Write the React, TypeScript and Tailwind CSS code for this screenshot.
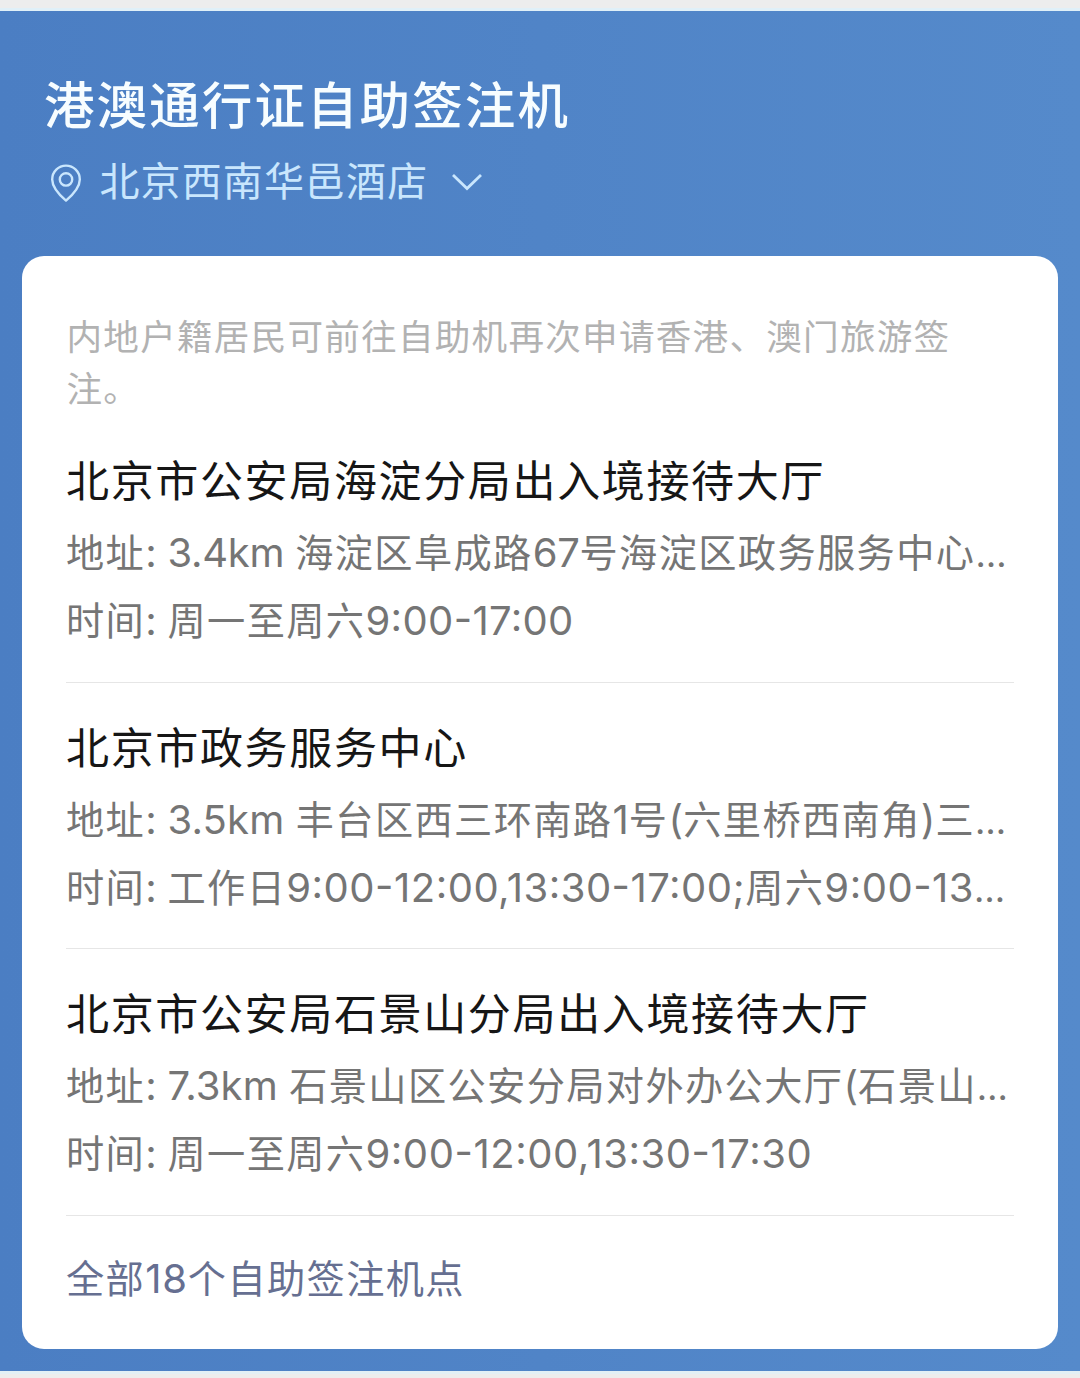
import React from "react";

type Site = {
  name: string;
  address: string;
  addressLatin: string;
  hours: string;
  hoursLatin: string;
};

const sites: Site[] = [
  {
    name: "北京市公安局海淀分局出入境接待大厅",
    address: "3.4km 海淀区阜成路67号海淀区政务服务中心…",
    addressLatin: "tracking-[-0.3px]",
    hours: "周一至周六9:00-17:00",
    hoursLatin: "tracking-[0.35px]",
  },
  {
    name: "北京市政务服务中心",
    address: "3.5km 丰台区西三环南路1号(六里桥西南角)三…",
    addressLatin: "tracking-[0.15px]",
    hours: "工作日9:00-12:00,13:30-17:00;周六9:00-13…",
    hoursLatin: "tracking-[0.5px]",
  },
  {
    name: "北京市公安局石景山分局出入境接待大厅",
    address: "7.3km 石景山区公安分局对外办公大厅(石景山…",
    addressLatin: "tracking-[0.1px]",
    hours: "周一至周六9:00-12:00,13:30-17:30",
    hoursLatin: "tracking-[0.55px]",
  },
];

function PinIcon() {
  return (
    <svg className="mt-[1px] h-[38px] w-[32px] shrink-0" viewBox="0 0 32 38" fill="none" stroke="currentColor" strokeWidth="2.4">
      <path d="M16 36.6C13 34 2.2 24.6 2.2 15.4a13.8 13.8 0 0 1 27.6 0C29.8 24.6 19 34 16 36.6Z" strokeLinejoin="round" />
      <circle cx="16" cy="15.4" r="6.2" />
    </svg>
  );
}

function ChevronIcon() {
  return (
    <svg className="h-[20px] w-[32px] shrink-0" viewBox="0 0 32 20" fill="none" stroke="currentColor" strokeWidth="2.8">
      <path d="M2 3 16 16.6 30 3" />
    </svg>
  );
}

/* Sets digits and Latin runs slightly larger and tighter than the Chinese around them. */
function MixedText({ text, latin }: { text: string; latin: string }) {
  return (
    <>
      {text.split(/([\x20-\x7e]+|…)/).map((run, i) => {
        if (i % 2 === 0) return run;
        return (
          <span key={i} className={run === "…" ? "text-[36px] tracking-normal" : `text-[40px] ${latin}`}>
            {run}
          </span>
        );
      })}
    </>
  );
}

function DetailLine({ label, text, latin }: { label: string; text: string; latin: string }) {
  return (
    <p className="flex h-[68px] text-[38.2px] leading-[68px] tracking-[1.4px] text-[#757575]">
      <span className="w-[101.5px] shrink-0">
        {label}
        <span className="text-[40px]">:</span>
      </span>
      <span>
        <MixedText text={text} latin={latin} />
      </span>
    </p>
  );
}

function SiteRow({ site }: { site: Site }) {
  return (
    <section className="h-[266.6px] border-b-[1.5px] border-[#e6e6e6] whitespace-nowrap">
      <h2 className="pt-[34px] text-[43px] leading-[62px] font-normal tracking-[1.65px] text-[#161616]">{site.name}</h2>
      <div className="pt-[7px]">
        <DetailLine label="地址" text={site.address} latin={site.addressLatin} />
        <DetailLine label="时间" text={site.hours} latin={site.hoursLatin} />
      </div>
    </section>
  );
}

export default function App() {
  return (
    <main className="flex h-[1378px] w-[1080px] flex-col overflow-hidden bg-[#ededed] pt-2 font-[Inter,'Noto_Sans_CJK_SC',sans-serif] [font-feature-settings:'calt'_1]">
      <div className="flex h-[1366px] flex-col border-y-[3px] border-t-[#e0f0f8] border-b-[#e3f0f5] bg-linear-to-r from-[#4b7ec3] to-[#558acb] bg-origin-border">
        <header className="h-[245px] pt-[62px] pl-[44px]">
          <h1 className="text-[50.5px] leading-[66px] font-medium tracking-[2.1px] text-[#f7fdff]">港澳通行证自助签注机</h1>
          <div className="mt-[13px] flex h-[60px] items-center pl-[6px] text-[#c9e6fd]">
            <PinIcon />
            <span className="ml-[17.5px] text-[40px] leading-[60px] tracking-[1.1px]">北京西南华邑酒店</span>
            <span className="ml-[23px]">
              <ChevronIcon />
            </span>
          </div>
        </header>
        <div className="mx-[22px] h-[1093px] rounded-[22px] bg-white px-[44px] pt-[56px]">
          <p className="h-[104px] pl-[0.5px] text-[35.6px] leading-[52px] tracking-[1.25px] text-[#b2b2b2]">
            内地户籍居民可前往自助机再次申请香港、澳门旅游签注。
          </p>
          {sites.map((site) => (
            <SiteRow key={site.name} site={site} />
          ))}
          <a className="mt-[30px] block h-[66px] text-[38.2px] leading-[66px] tracking-[1.4px] text-[#666f91]">
            <MixedText text="全部18个自助签注机点" latin="tracking-[0.8px]" />
          </a>
        </div>
      </div>
    </main>
  );
}
